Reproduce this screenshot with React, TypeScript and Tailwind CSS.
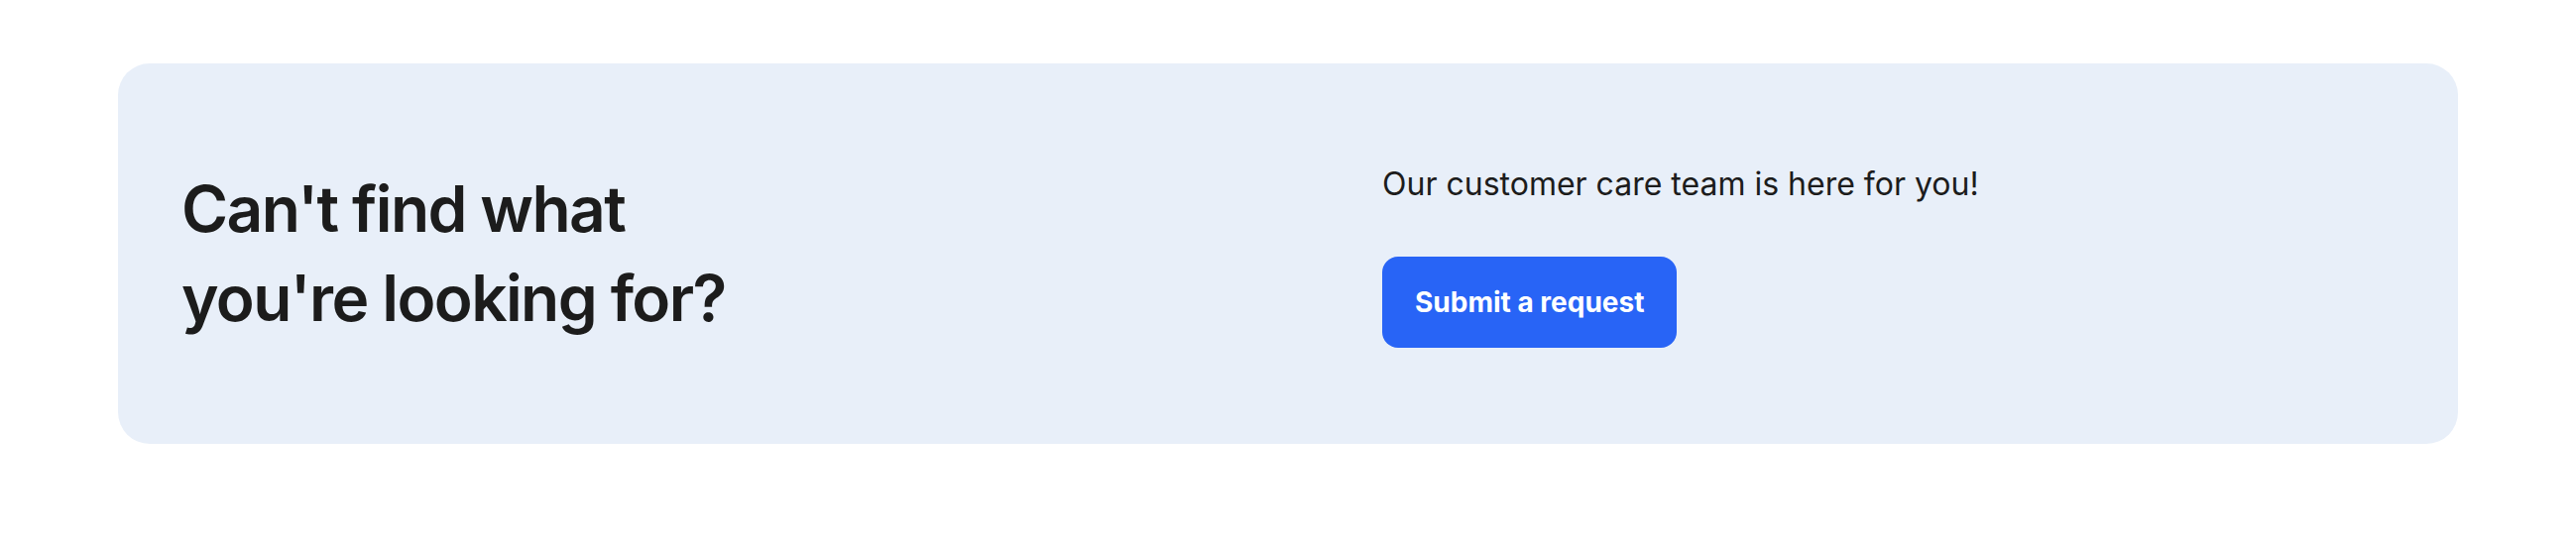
export default function App() {
  return (
    <div className="min-h-[544px] bg-white px-[119px] pt-[64px] font-['Inter','Noto_Sans',sans-serif]">
      <section className="flex h-[384px] items-center rounded-[32px] bg-[#e8eff9] pl-[64px]">
        {/* Heading */}
        <div className="w-[1211px] shrink-0">
          <h2 className="text-[64px] font-semibold leading-[90px] tracking-tight text-[#1c1c1c]">
            Can't find what
            <br />
            you're looking for?
          </h2>
        </div>

        {/* Contact */}
        <div className="flex flex-col items-start">
          <p className="text-[32px] leading-[48px] text-[#1c1c1c]">Our customer care team is here for you!</p>
          <button className="mt-[49px] h-[92px] rounded-[16px] bg-[#2864f6] px-[33px] text-[28px] font-bold text-white">
            Submit a request
          </button>
        </div>
      </section>
    </div>
  );
}
